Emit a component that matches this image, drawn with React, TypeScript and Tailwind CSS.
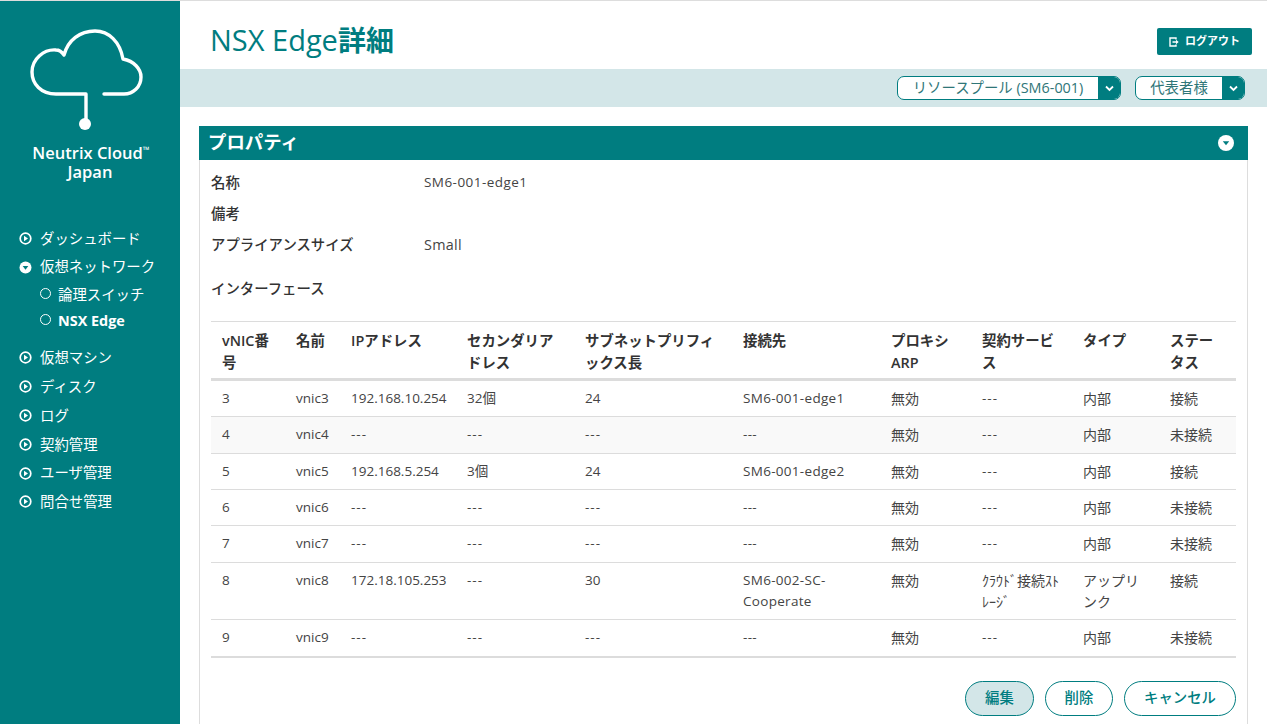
import type { ReactNode } from 'react';

const CJK = 'text-[14px]';
const LAT = 'text-[13.5px]';

function PlayCircle() {
  return (
    <svg width="13" height="13" viewBox="0 0 13 13" className="shrink-0">
      <circle cx="6.5" cy="6.5" r="5.3" fill="none" stroke="white" strokeWidth="1.7" />
      <path d="M5 3.7 9 6.5 5 9.3z" fill="white" />
    </svg>
  );
}

function OpenCircle() {
  return (
    <svg width="13" height="13" viewBox="0 0 13 13" className="shrink-0">
      <circle cx="6.5" cy="6.5" r="6" fill="white" />
      <path d="M3.7 5 6.5 8.8 9.3 5z" fill="#007d80" />
    </svg>
  );
}

function Chevron() {
  return (
    <svg width="9" height="7" viewBox="0 0 9 7">
      <path d="M1 1.5 4.5 5 8 1.5" fill="none" stroke="white" strokeWidth="1.8" />
    </svg>
  );
}

function NavItem({ label, open }: { label: string; open?: boolean }) {
  return (
    <div className="flex h-[28.8px] items-center gap-[8px] pl-[19px] text-[14.4px] text-white">
      {open ? <OpenCircle /> : <PlayCircle />}
      <span>{label}</span>
    </div>
  );
}

function SubItem({ label, bold }: { label: string; bold?: boolean }) {
  return (
    <div className="flex h-[26px] items-center gap-[7px] pl-[40px] text-white">
      <span className="mb-[2px] h-[11px] w-[11px] shrink-0 rounded-full border border-white" />
      <span className={bold ? 'text-[14.4px] font-bold' : 'text-[14.4px]'}>{label}</span>
    </div>
  );
}

function Sidebar() {
  return (
    <aside className="w-[180px] shrink-0 bg-[#007d80]">
      <div className="flex flex-col items-center pt-[27px]">
        <svg width="120" height="106" viewBox="30 28 120 106">
          <path
            d="M86 94H56C41 94 32 84 32 72 32 59 44 49 56 50 59 50 62 52 64 55 68 40 80 31 95 31 109 31 120 42 123 59 134 61 141 69 141 77 141 87 133 94 124 94H104M86 94V120"
            fill="none"
            stroke="white"
            strokeWidth="3.4"
            strokeLinecap="round"
            strokeLinejoin="round"
          />
          <circle cx="85" cy="124" r="6" fill="white" />
        </svg>
        <div className="mt-[9px] text-center text-[16.5px] font-semibold leading-[19px] text-white">
          <div className="pl-[2px]">
            Neutrix Cloud<span className="align-top text-[9px] font-normal leading-[14px]">™</span>
          </div>
          <div>Japan</div>
        </div>
      </div>
      <nav className="mt-[43px]">
        <NavItem label="ダッシュボード" />
        <NavItem label="仮想ネットワーク" open />
        <SubItem label="論理スイッチ" />
        <SubItem label="NSX Edge" bold />
        <div className="h-[10px]" />
        <NavItem label="仮想マシン" />
        <NavItem label="ディスク" />
        <NavItem label="ログ" />
        <NavItem label="契約管理" />
        <NavItem label="ユーザ管理" />
        <NavItem label="問合せ管理" />
      </nav>
    </aside>
  );
}

function Select({ label, className }: { label: string; className: string }) {
  return (
    <div className={`flex h-[24px] overflow-hidden rounded-[7px] border border-[#007d80] bg-white ${className}`}>
      <div className="flex flex-1 items-center justify-center pb-[1px] text-[14.4px] text-[#2f7678]">{label}</div>
      <div className="flex w-[22px] items-center justify-center bg-[#007d80]">
        <Chevron />
      </div>
    </div>
  );
}

function Pill({ children, className }: { children: ReactNode; className: string }) {
  return (
    <button
      className={`flex h-[35px] items-center justify-center rounded-full border border-[#007d80] text-[14.4px] font-medium text-[#007d80] ${className}`}
    >
      {children}
    </button>
  );
}

type Row = {
  no: string;
  name: string;
  ip: ReactNode;
  sec: ReactNode;
  prefix: string;
  dest: ReactNode;
  svc: ReactNode;
  type: string;
  status: string;
};

const rows: Row[] = [
  { no: '3', name: 'vnic3', ip: '192.168.10.254', sec: '32個', prefix: '24', dest: 'SM6-001-edge1', svc: '---', type: '内部', status: '接続' },
  { no: '4', name: 'vnic4', ip: '---', sec: '---', prefix: '---', dest: '---', svc: '---', type: '内部', status: '未接続' },
  { no: '5', name: 'vnic5', ip: '192.168.5.254', sec: '3個', prefix: '24', dest: 'SM6-001-edge2', svc: '---', type: '内部', status: '接続' },
  { no: '6', name: 'vnic6', ip: '---', sec: '---', prefix: '---', dest: '---', svc: '---', type: '内部', status: '未接続' },
  { no: '7', name: 'vnic7', ip: '---', sec: '---', prefix: '---', dest: '---', svc: '---', type: '内部', status: '未接続' },
  { no: '8', name: 'vnic8', ip: '172.18.105.253', sec: '---', prefix: '30', dest: 'SM6-002-SC-Cooperate', svc: 'ｸﾗｳﾄﾞ接続ｽﾄﾚｰｼﾞ', type: 'アップリンク', status: '接続' },
  { no: '9', name: 'vnic9', ip: '---', sec: '---', prefix: '---', dest: '---', svc: '---', type: '内部', status: '未接続' },
];

const headers: { label: string; w: string }[] = [
  { label: 'vNIC番号', w: 'w-[74px]' },
  { label: '名前', w: 'w-[55px]' },
  { label: 'IPアドレス', w: 'w-[116px]' },
  { label: 'セカンダリアドレス', w: 'w-[118px]' },
  { label: 'サブネットプリフィックス長', w: 'w-[158px]' },
  { label: '接続先', w: 'w-[148px]' },
  { label: 'プロキシARP', w: 'w-[91px]' },
  { label: '契約サービス', w: 'w-[101px]' },
  { label: 'タイプ', w: 'w-[87px]' },
  { label: 'ステータス', w: 'w-[77px]' },
];

function Td({ children, size = LAT }: { children: ReactNode; size?: string }) {
  const dashes = children === '---';
  return (
    <td className={`px-[11px] pb-[6.73px] pt-[7px] align-top leading-[21.6px] ${size} ${dashes ? 'tracking-[1px]' : ''}`}>
      {children}
    </td>
  );
}

function InterfaceTable() {
  return (
    <table className="w-[1025px] table-fixed border-collapse text-[#444]">
      <thead>
        <tr className="border-b-[3px] border-t border-b-[#dcdcdc] border-t-[#dcdcdc]">
          {headers.map((h) => (
            <th
              key={h.label}
              className={`${h.w} px-[11px] pb-[4.8px] pt-[8px] text-left align-top text-[14.4px] font-semibold leading-[21.6px] text-[#333]`}
            >
              {h.label}
            </th>
          ))}
        </tr>
      </thead>
      <tbody>
        {rows.map((r, i) => (
          <tr
            key={r.no}
            className={`border-b border-[#dcdcdc] ${i === 1 ? 'bg-[#f9f9f9]' : ''} ${i === rows.length - 1 ? 'border-b-[2px]' : ''}`}
          >
            <Td>{r.no}</Td>
            <Td>{r.name}</Td>
            <Td>{r.ip}</Td>
            <Td>{r.sec}</Td>
            <Td>{r.prefix}</Td>
            <Td>
              <span className="tracking-[0.3px]">{r.dest}</span>
            </Td>
            <Td size={CJK}>無効</Td>
            <Td size={r.svc === '---' ? LAT : CJK}>{r.svc}</Td>
            <Td size={CJK}>{r.type}</Td>
            <Td size={CJK}>{r.status}</Td>
          </tr>
        ))}
      </tbody>
    </table>
  );
}

function Property({ label, children }: { label: string; children?: ReactNode }) {
  return (
    <div className="flex h-[31px] items-center">
      <div className="w-[213px] text-[14.4px] font-medium text-[#333]">{label}</div>
      {children}
    </div>
  );
}

export default function App() {
  return (
    <div
      className="flex h-screen overflow-hidden border-t border-[#dddddd] bg-white"
      style={{ fontFamily: '"Open Sans", "Noto Sans CJK JP", sans-serif' }}
    >
      <Sidebar />
      <main className="min-w-0 flex-1">
        <header className="flex h-[68px] items-start justify-between pl-[30px] pr-[15px]">
          <h1 className="mt-[19px] text-[29px] font-medium leading-[40px] text-[#007d80]">
            NSX Edge<span className="text-[28px] font-semibold">詳細</span>
          </h1>
          <button className="mt-[27px] flex h-[27px] w-[95px] items-center justify-center gap-[6px] rounded-[2px] bg-[#007d80] text-[11px] font-semibold text-white">
            <svg width="10" height="10" viewBox="0 0 10 10">
              <path d="M7 2.5V1H1v8h6V7.5" fill="none" stroke="white" strokeWidth="1.4" />
              <path d="M3.5 4.2H7V2.8L9.7 5 7 7.2V5.8H3.5z" fill="white" />
            </svg>
            ログアウト
          </button>
        </header>
        <div className="flex h-[38px] items-center justify-end gap-[14px] bg-[#d3e6e8] pr-[22px]">
          <Select label="リソースプール (SM6-001)" className="w-[224px]" />
          <Select label="代表者様" className="w-[110px]" />
        </div>
        <section className="ml-[19px] mr-[19px] mt-[19px] border-x border-[#dddddd]">
          <div className="-mx-px flex h-[34px] items-center justify-between bg-[#007d80] pl-[9px] pr-[14px]">
            <h2 className="pb-[2px] text-[18.4px] font-bold text-white">プロパティ</h2>
            <svg width="16" height="16" viewBox="0 0 16 16">
              <circle cx="8" cy="8" r="8" fill="white" />
              <path d="M4.8 6.3h6.4L8 10.3z" fill="#007d80" />
            </svg>
          </div>
          <div className="px-[11px] pb-[40px] pt-[7px]">
            <Property label="名称">
              <div className="text-[13.5px] tracking-[0.45px] text-[#444]">SM6-001-edge1</div>
            </Property>
            <Property label="備考" />
            <Property label="アプライアンスサイズ">
              <div className="text-[14.4px] tracking-[0.3px] text-[#444]">Small</div>
            </Property>
            <div className="mb-[21px] mt-[18px] text-[14.4px] font-medium leading-[22px] text-[#333]">
              インターフェース
            </div>
            <InterfaceTable />
            <div className="mt-[23px] flex justify-end gap-[11px]">
              <Pill className="w-[69px] bg-[#d3e6e8]">編集</Pill>
              <Pill className="w-[68px]">削除</Pill>
              <Pill className="w-[112px]">キャンセル</Pill>
            </div>
          </div>
        </section>
      </main>
    </div>
  );
}
